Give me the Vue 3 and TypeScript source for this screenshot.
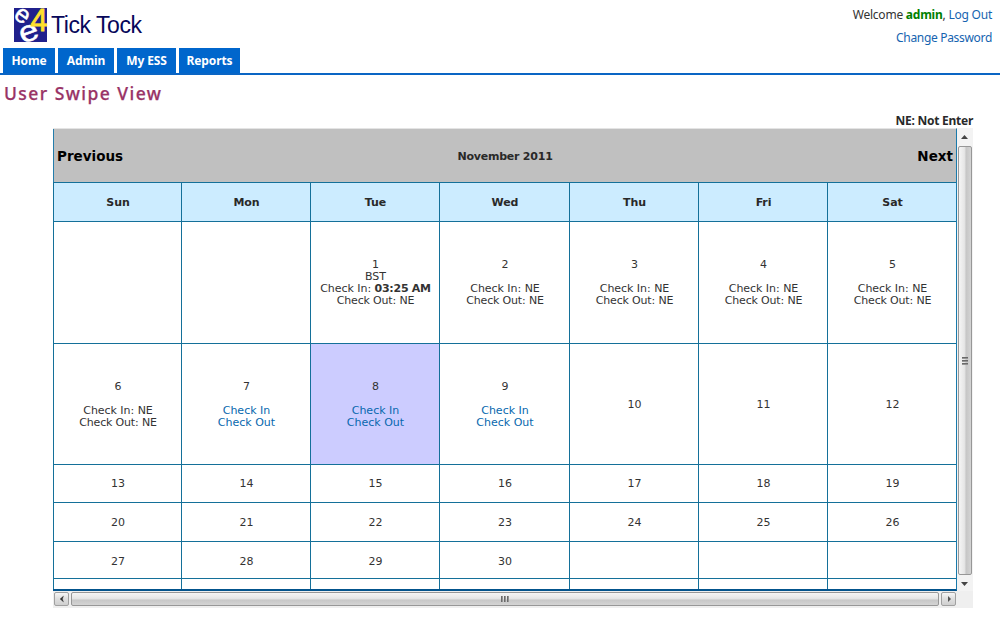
<script setup lang="ts">
interface Day {
  n: number | null
  kind?: 'ne' | 'links' | 'bst'
  today?: boolean
}

const tabs = ['Home', 'Admin', 'My ESS', 'Reports']
const weekdays = ['Sun', 'Mon', 'Tue', 'Wed', 'Thu', 'Fri', 'Sat']

function makeDay(i: number): Day {
  const n = i - 1
  if (n < 1 || n > 30) return { n: null }
  if (n === 1) return { n, kind: 'bst' }
  if (n <= 6) return { n, kind: 'ne' }
  if (n <= 9) return { n, kind: 'links', today: n === 8 }
  return { n }
}

const days: Day[] = Array.from({ length: 42 }, (_, i) => makeDay(i))
</script>

<template>
  <div class="page">
    <header class="top">
      <div class="brand">
        <svg class="logo" width="33" height="34" viewBox="0 0 33 34">
          <rect width="33" height="34" fill="#20208c" />
          <g font-family="Liberation Sans, Arial, sans-serif" text-anchor="middle">
            <text transform="translate(8 8) rotate(35)" y="6.500" font-size="25" fill="#fff" stroke="#fff" stroke-width=".5">e</text>
            <text transform="translate(15 25.500) rotate(-20) scale(1.200 1)" y="7.500" font-size="29" fill="#fff" stroke="#fff" stroke-width=".5">e</text>
            <text x="25" y="22.500" font-size="31" fill="#ffe02c" stroke="#ffe02c" stroke-width=".8">4</text>
          </g>
        </svg>
        <span class="name">Tick Tock</span>
      </div>
      <div class="account">
        <div>Welcome <b>admin</b>, <a>Log Out</a></div>
        <div class="change"><a>Change Password</a></div>
      </div>
    </header>
    <nav class="tabs">
      <a v-for="(t, i) in tabs" :key="t" :class="'tab tab' + i">{{ t }}</a>
    </nav>
    <h1>User Swipe View</h1>
    <div class="legend">NE: Not Enter</div>

    <div class="scroller">
      <div class="calendar">
        <div class="month">
          <a class="prev">Previous</a>
          <span class="title">November 2011</span>
          <a class="next">Next</a>
        </div>
        <div class="grid">
          <div v-for="w in weekdays" :key="w" class="cell weekday">{{ w }}</div>
          <div
            v-for="(d, i) in days"
            :key="i"
            class="cell"
            :class="{ today: d.today, second: i >= 7 && i < 14, low: i >= 21, last: i >= 28 }"
          >
            <template v-if="d.n !== null">
              <div>{{ d.n }}</div>
              <template v-if="d.kind">
                <div class="zone">{{ d.kind === 'bst' ? 'BST' : '' }}</div>
                <template v-if="d.kind === 'links'">
                  <a>Check In</a>
                  <a>Check Out</a>
                </template>
                <template v-else>
                  <div class="in">Check In: <b v-if="d.kind === 'bst'">03:25 AM</b><template v-else>NE</template></div>
                  <div class="out">Check Out: NE</div>
                </template>
              </template>
            </template>
          </div>
        </div>
      </div>
      <div class="vbar">
        <svg class="varrow" width="16" height="18" viewBox="0 0 16 18"><path d="M4 11 L7.500 7 L11 11Z" fill="#444" /></svg>
        <div class="vthumb"><i></i><i></i><i></i></div>
        <svg class="varrow" width="16" height="16" viewBox="0 0 16 16"><path d="M4 7 L7.500 11 L11 7Z" fill="#444" /></svg>
      </div>
      <div class="hbar">
        <div class="hbtn"><svg width="12" height="12" viewBox="0 0 12 12"><path d="M7.500 3 L4 6 L7.500 9 L6.500 6Z" fill="#333" stroke="#333" stroke-width=".3" /></svg></div>
        <div class="hthumb"><i></i><i></i><i></i></div>
        <div class="hbtn"><svg width="12" height="12" viewBox="0 0 12 12"><path d="M5 3 L8 6 L5 9Z" fill="#555" /></svg></div>
      </div>
    </div>
  </div>
</template>

<style>
body { background: #fff; }
</style>

<style scoped>
.page {
  width: 1000px;
  height: 619px;
  overflow: hidden;
  box-sizing: border-box;
  background: #fff;
  color: #333;
  font-family: "Noto Sans", "Open Sans", sans-serif;
}
.top { display: flex; justify-content: space-between; height: 48px; }
.brand { display: flex; padding: 8px 0 0 14px; }
.logo { display: block; overflow: visible; }
.name {
  margin-left: 4px;
  font: 23px/34px "Liberation Sans", Arial, sans-serif;
  color: #07075a;
  white-space: nowrap;
  letter-spacing: -0.45px;
}
.account {
  padding: 3px 8px 0 0;
  text-align: right;
  font-size: 12px;
  line-height: 23px;
  letter-spacing: -0.23px;
}
.change { letter-spacing: -0.32px; }
.account b { color: #008000; }
.account a { color: #1564b0; }
.tabs {
  display: flex;
  gap: 3px;
  height: 25px;
  padding-left: 3px;
  border-bottom: 2px solid #0a65c4;
}
.tab {
  height: 25px;
  background: #0066cc;
  color: #fff;
  font-size: 12px;
  font-weight: 700;
  line-height: 26px;
  letter-spacing: -0.1px;
  text-align: center;
  white-space: nowrap;
}
.tab0 { width: 52px; }
.tab1 { width: 56px; }
.tab2 { width: 59px; }
.tab3 { width: 61px; }
h1 {
  box-sizing: border-box;
  height: 37px;
  margin: 0;
  padding: 6px 0 0 4px;
  color: #993366;
  font: 500 17.500px/24px "Noto Sans", sans-serif;
  letter-spacing: 1.45px;
  -webkit-text-stroke: 0.25px #993366;
}
.legend {
  height: 17px;
  margin-top: -1px;
  padding-right: 27px;
  font-size: 12px;
  font-weight: 700;
  line-height: 19px;
  letter-spacing: -0.25px;
  text-align: right;
  color: #292929;
}
.scroller {
  display: grid;
  grid-template-columns: 904px 16px;
  grid-template-rows: 463px 17px;
  width: 920px;
  margin-left: 53px;
  background: #f1f1f1;
}
.calendar {
  box-sizing: border-box;
  height: 463px;
  overflow: hidden;
  border-right: 1px solid #1a7aab;
  border-bottom: 2px solid #03538c;
  border-top: 1px solid #e4e4e4;
  background: #fff;
  font: 11px/12px "DejaVu Sans", Verdana, sans-serif;
}
.month {
  display: flex;
  justify-content: space-between;
  align-items: center;
  box-sizing: border-box;
  height: 53px;
  padding: 1px 3px 0;
  border-left: 1px solid #247dab;
  background: #c0c0c0;
  font-weight: 700;
  color: #000;
}
.prev, .next { width: 120px; font-size: 13.500px; }
.next { text-align: right; }
.title { padding-top: 2px; font-size: 11px; letter-spacing: -0.22px; color: #292929; }
.grid {
  display: grid;
  grid-template-columns: 128px 129px 129px 130px 129px 129px 129px;
  grid-template-rows: 39px 122px 121px 38px 39px 37px 38px;
}
.cell {
  display: flex;
  flex-direction: column;
  align-items: center;
  justify-content: center;
  box-sizing: border-box;
  padding-left: 1px;
  border-left: 1px solid #147099;
  border-top: 1px solid #147099;
  overflow: hidden;
  white-space: nowrap;
}
.cell a { color: #0768ae; }
.in { letter-spacing: -0.04px; }
.in b { letter-spacing: -0.25px; }
.out { letter-spacing: -0.17px; }
.second { padding-top: 1px; }
.low { padding-top: 2px; }
.last { padding-top: 3px; }
.weekday { background: #ccecff; font-weight: 700; color: #292929; padding-top: 2px; letter-spacing: -0.1px; }
.zone { height: 12px; }
.today { background: #ccccff; }
.vbar { display: flex; flex-direction: column; align-items: center; background: #f3f3f3; }
.varrow { display: block; }
.vthumb, .hthumb {
  display: flex;
  box-sizing: border-box;
  align-items: center;
  justify-content: center;
  border: 1px solid #979797;
  border-radius: 2px;
  gap: 1px;
}
.vthumb {
  flex-direction: column;
  width: 14px;
  height: 429px;
  background: linear-gradient(90deg, #f5f5f5, #e6e6e6 45%, #c6c6c6 60%, #d4d4d4);
}
.vthumb i { width: 6px; height: 2px; background: linear-gradient(#555, #aaa); }
.hbar {
  grid-column: 1 / 3;
  display: flex;
  gap: 2px;
  padding: 1px 17px 2px 1px;
  background: #efefef;
}
.hbtn {
  display: flex;
  align-items: center;
  justify-content: center;
  box-sizing: border-box;
  width: 15px;
  height: 14px;
  border: 1px solid #a0a0a0;
  border-radius: 2px;
  background: linear-gradient(#f7f7f7, #dedede 50%, #cfcfcf);
}
.hthumb {
  flex: 1;
  height: 14px;
  background: linear-gradient(#f5f5f5, #e6e6e6 45%, #c8c8c8 60%, #d4d4d4);
}
.hthumb i { width: 2px; height: 6px; background: linear-gradient(90deg, #555, #aaa); }
</style>
